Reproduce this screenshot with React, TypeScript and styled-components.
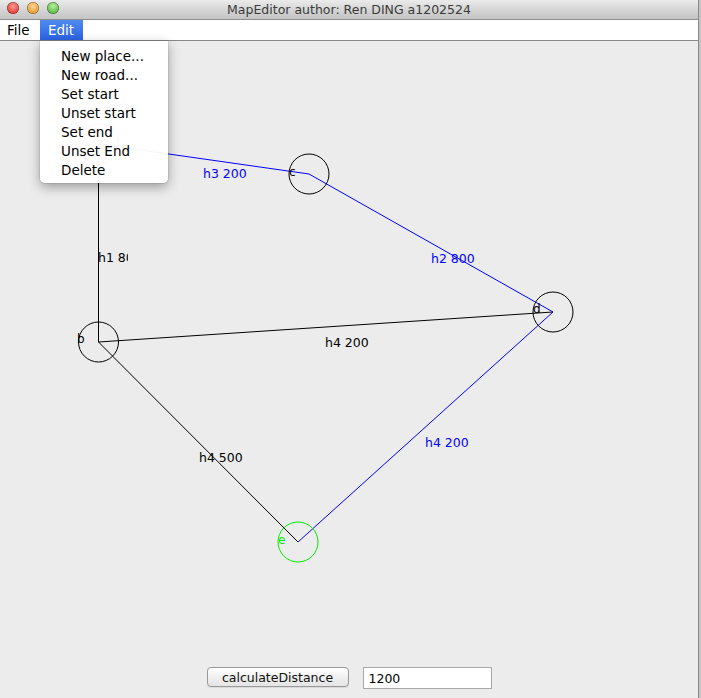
import React from "react";
import styled, { createGlobalStyle } from "styled-components";

const Global = createGlobalStyle`
  html, body { margin: 0; padding: 0; background: #ececec; overflow: hidden; }
  body { font-family: "DejaVu Sans", "Liberation Sans", sans-serif; }
`;

const Screen = styled.div`
  display: flex;
  width: 701px;
  height: 698px;
`;

const Window = styled.div`
  position: relative;
  width: 698px;
  height: 698px;
  display: flex;
  flex-direction: column;
  background: #ececec;
`;

const EdgeStrip = styled.div`
  width: 3px;
  height: 698px;
  background: linear-gradient(to right, #8a8a8a 0 1px, #c4c4c4 1px);
`;

const TitleBar = styled.div`
  position: relative;
  height: 19px;
  border-bottom: 1px solid #8e8e8e;
  background: linear-gradient(to bottom, #ebebeb, #d2d2d2 60%, #c4c4c4);
  display: flex;
  align-items: center;
  justify-content: center;
  font-size: 12.5px;
  color: #3a3a3a;
`;

const Lights = styled.div`
  position: absolute;
  left: 7px;
  top: 2px;
  display: flex;
  gap: 8px;
`;

const Light = styled.span<{ $c1: string; $c2: string }>`
  width: 12px;
  height: 12px;
  border-radius: 50%;
  background: radial-gradient(circle at 50% 35%, ${(p) => p.$c1}, ${(p) => p.$c2} 75%);
  box-shadow: inset 0 0 0 0.5px rgba(0, 0, 0, 0.45);
`;

const MenuBar = styled.div`
  height: 20px;
  border-bottom: 1px solid #8a8a8a;
  background: #fff;
  display: flex;
  align-items: stretch;
`;

const MenuTitle = styled.div<{ $active?: boolean; $w: number }>`
  width: ${(p) => p.$w}px;
  box-sizing: border-box;
  display: flex;
  align-items: center;
  padding-left: ${(p) => (p.$active ? 8 : 7)}px;
  font-size: 13.5px;
  color: ${(p) => (p.$active ? "#fff" : "#000")};
  background: ${(p) =>
    p.$active ? "linear-gradient(to bottom, #5089f1, #2b63e3)" : "transparent"};
`;

const Body = styled.div`
  position: relative;
  flex: 1;
  display: flex;
  flex-direction: column;
`;

const CanvasArea = styled.div`
  flex: 1;
`;

const Footer = styled.div`
  height: 31px;
  display: flex;
  justify-content: center;
  align-items: flex-start;
  gap: 14px;
`;

const Button = styled.button`
  width: 142px;
  height: 20px;
  margin: 0;
  padding: 0;
  border: 1px solid #9a9a9a;
  border-radius: 4px;
  background: linear-gradient(to bottom, #ffffff, #f1f1f1 50%, #e4e4e4);
  font-family: "DejaVu Sans", sans-serif;
  font-size: 12.5px;
  color: #111;
  box-shadow: 0 1px 0 rgba(0, 0, 0, 0.08);
`;

const Field = styled.div`
  width: 129px;
  height: 22px;
  box-sizing: border-box;
  border: 1px solid #a8a8a8;
  background: #fff;
  font-size: 12.5px;
  color: #000;
  padding-left: 5px;
  display: flex;
  align-items: center;
`;

const Menu = styled.div`
  position: absolute;
  left: 40px;
  top: 0;
  width: 128px;
  height: 142px;
  box-sizing: border-box;
  padding-top: 6px;
  background: rgba(255, 255, 255, 0.96);
  border-radius: 0 0 5px 5px;
  box-shadow: 0 4px 12px rgba(0, 0, 0, 0.35), 0 0 0 0.5px rgba(0, 0, 0, 0.15);
  display: flex;
  flex-direction: column;
`;

const MenuItem = styled.div`
  height: 19px;
  line-height: 19px;
  padding-left: 21px;
  font-size: 13.5px;
  color: #000;
  white-space: nowrap;
`;

const Label = styled.text<{ $fill: string }>`
  font-family: "DejaVu Sans", sans-serif;
  font-size: 12.5px;
  fill: ${(p) => p.$fill};
`;

const NodeLabel = styled.text<{ $fill: string }>`
  font-family: "DejaVu Sans", sans-serif;
  font-size: 12px;
  fill: ${(p) => p.$fill};
`;

type Pt = [number, number];
const nodes: Record<string, { p: Pt; color: string; label?: Pt; text?: string }> = {
  a: { p: [98.5, 144], color: "#ff0000" },
  b: { p: [98.5, 342], color: "#000", label: [77, 343], text: "b" },
  c: { p: [309, 174], color: "#000", label: [289, 176], text: "c" },
  d: { p: [553, 312], color: "#000", label: [533, 313], text: "d" },
  e: { p: [298, 542], color: "#00ee00", label: [278, 544], text: "e" },
};

const edges: { from: string; to: string; color: string; text: string; at: Pt; clip?: boolean }[] = [
  { from: "a", to: "b", color: "#000", text: "h1 80", at: [98, 262], clip: true },
  { from: "a", to: "c", color: "#0000ff", text: "h3 200", at: [203, 178] },
  { from: "c", to: "d", color: "#0000ff", text: "h2 800", at: [431, 263] },
  { from: "b", to: "d", color: "#000", text: "h4 200", at: [325, 347] },
  { from: "b", to: "e", color: "#000", text: "h4 500", at: [199, 462] },
  { from: "e", to: "d", color: "#0000ff", text: "h4 200", at: [425, 447] },
];

function MapCanvas() {
  return (
    <svg width="698" height="626" viewBox="0 41 698 626" style={{ display: "block" }}>
      <defs>
        <clipPath id="h1clip">
          <rect x="0" y="0" width="128" height="700" />
        </clipPath>
      </defs>
      {edges.map((e, i) => {
        const a = nodes[e.from].p;
        const b = nodes[e.to].p;
        return (
          <line key={"l" + i} x1={a[0]} y1={a[1]} x2={b[0]} y2={b[1]} stroke={e.color} strokeWidth={1} />
        );
      })}
      {Object.entries(nodes).map(([k, n]) => (
        <g key={k}>
          <circle cx={n.p[0]} cy={n.p[1]} r={20} fill="none" stroke={n.color} strokeWidth={1} />
          {n.label && n.text && (
            <NodeLabel $fill={n.color} x={n.label[0]} y={n.label[1]}>
              {n.text}
            </NodeLabel>
          )}
        </g>
      ))}
      {edges.map((e, i) => (
        <Label
          key={"t" + i}
          $fill={e.color}
          x={e.at[0]}
          y={e.at[1]}
          clipPath={e.clip ? "url(#h1clip)" : undefined}
        >
          {e.text}
        </Label>
      ))}
    </svg>
  );
}

export default function App() {
  return (
    <>
      <Global />
      <Screen>
        <Window>
          <TitleBar>
            <Lights>
              <Light $c1="#ff9a90" $c2="#dd3b33" />
              <Light $c1="#ffd59a" $c2="#e0982d" />
              <Light $c1="#b8f2a0" $c2="#5ab244" />
            </Lights>
            MapEditor author: Ren DING a1202524
          </TitleBar>
          <MenuBar>
            <MenuTitle $w={40}>File</MenuTitle>
            <MenuTitle $w={43} $active>
              Edit
            </MenuTitle>
          </MenuBar>
          <Body>
            <CanvasArea>
              <MapCanvas />
            </CanvasArea>
            <Footer>
              <Button>calculateDistance</Button>
              <Field>1200</Field>
            </Footer>
            <Menu>
              <MenuItem>New place...</MenuItem>
              <MenuItem>New road...</MenuItem>
              <MenuItem>Set start</MenuItem>
              <MenuItem>Unset start</MenuItem>
              <MenuItem>Set end</MenuItem>
              <MenuItem>Unset End</MenuItem>
              <MenuItem>Delete</MenuItem>
            </Menu>
          </Body>
        </Window>
        <EdgeStrip />
      </Screen>
    </>
  );
}
